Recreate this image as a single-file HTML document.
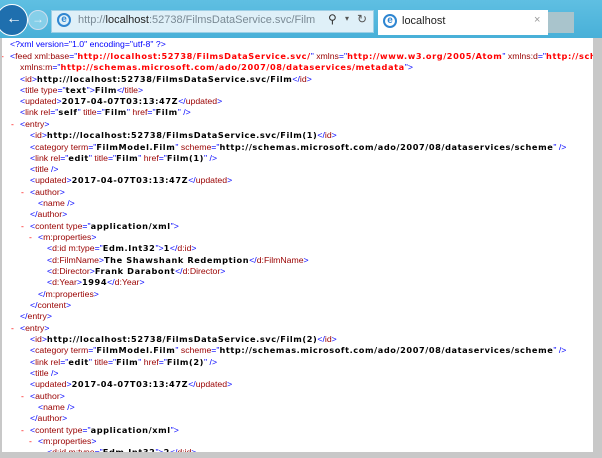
<!DOCTYPE html>
<html><head><meta charset="utf-8"><style>
html,body{margin:0;padding:0}
body{width:602px;height:458px;overflow:hidden;background:#c8c8c8;position:relative;font-family:"Liberation Sans",sans-serif}
#tb{position:absolute;left:0;top:0;width:602px;height:38px;background:linear-gradient(#5fbfe2,#48b0d8)}
#page{position:absolute;left:2px;top:38px;width:591px;height:414px;background:#fff;overflow:hidden}
.l{position:absolute;white-space:nowrap;font-size:8.7px;line-height:11px;color:#990000}
.b{color:#0000ff}.v,.r{font-family:"DejaVu Sans",sans-serif;font-size:8.2px;font-weight:bold;letter-spacing:0.6px}.v{color:#000}.r{color:#f00}.m{color:#f00;position:absolute;left:-9px}
</style></head><body>
<div id="tb">
 <div style="position:absolute;left:-4px;top:4px;width:30px;height:30px;border-radius:50%;background:#1f6fae;border:1px solid #fff"></div>
 <div style="position:absolute;left:6px;top:11px;color:#fff;font-size:16px;font-weight:bold;line-height:16px">&#8592;</div>
 <div style="position:absolute;left:28px;top:10px;width:18px;height:18px;border-radius:50%;border:1px solid #cde;background:#86cfe9"></div>
 <div style="position:absolute;left:32px;top:12px;color:#e8f4fa;font-size:12px;line-height:14px">&#8594;</div>
 <div style="position:absolute;left:51px;top:10px;width:321px;height:21px;background:#dff0f8;border:1px solid #9ccfe6"></div>
 <div style="position:absolute;left:57px;top:13px;width:14px;height:14px;border-radius:50%;border:2px solid #2f86d1;box-sizing:border-box;color:#2f86d1;font-size:10px;font-weight:bold;line-height:10px;text-align:center">e</div>
 <div style="position:absolute;left:78px;top:14px;font-size:11px;color:#7a8a95">http://<span style="color:#222">localhost</span>:52738/FilmsDataService.svc/Film</div>
 <div style="position:absolute;left:328px;top:12px;font-size:12px;color:#333">&#9906;</div>
 <div style="position:absolute;left:345px;top:14px;font-size:8px;color:#555">&#9662;</div>
 <div style="position:absolute;left:357px;top:12px;font-size:12px;color:#555">&#8635;</div>
 <div style="position:absolute;left:378px;top:10px;width:170px;height:25px;background:#fff"></div>
 <div style="position:absolute;left:383px;top:14px;width:14px;height:14px;border-radius:50%;border:2px solid #2f86d1;box-sizing:border-box;color:#2f86d1;font-size:10px;font-weight:bold;line-height:10px;text-align:center">e</div>
 <div style="position:absolute;left:402px;top:15px;font-size:11px;color:#222">localhost</div>
 <div style="position:absolute;left:534px;top:14px;font-size:11px;color:#999">&#215;</div>
 <div style="position:absolute;left:548px;top:12px;width:26px;height:21px;background:#a9c4cc"></div>
</div>
<div id="page">
<div class="l b" style="left:8px;top:1px">&lt;?xml version="1.0" encoding="utf-8" ?&gt;</div>
<div class="l" style="left:8px;top:13px"><span class="m">-</span><span class="b">&lt;</span>feed xml:base<span class="b">="</span><span class="r">http://localhost:52738/FilmsDataService.svc/</span><span class="b">"</span> xmlns<span class="b">="</span><span class="r">http://www.w3.org/2005/Atom</span><span class="b">"</span> xmlns:d<span class="b">="</span><span class="r">http://schemas.microsoft.com/ado/2007/08/dataservices</span></div>
<div class="l" style="left:18px;top:24px">xmlns:m<span class="b">="</span><span class="r">http://schemas.microsoft.com/ado/2007/08/dataservices/metadata</span><span class="b">"&gt;</span></div>
<div class="l" style="left:18px;top:36px"><span class="b">&lt;</span>id<span class="b">&gt;</span><span class="v">http://localhost:52738/FilmsDataService.svc/Film</span><span class="b">&lt;/</span>id<span class="b">&gt;</span></div>
<div class="l" style="left:18px;top:47px"><span class="b">&lt;</span>title type<span class="b">="</span><span class="v">text</span><span class="b">"&gt;</span><span class="v">Film</span><span class="b">&lt;/</span>title<span class="b">&gt;</span></div>
<div class="l" style="left:18px;top:58px"><span class="b">&lt;</span>updated<span class="b">&gt;</span><span class="v">2017-04-07T03:13:47Z</span><span class="b">&lt;/</span>updated<span class="b">&gt;</span></div>
<div class="l" style="left:18px;top:69px"><span class="b">&lt;</span>link rel<span class="b">="</span><span class="v">self</span><span class="b">"</span> title<span class="b">="</span><span class="v">Film</span><span class="b">"</span> href<span class="b">="</span><span class="v">Film</span><span class="b">" /&gt;</span></div>

<div class="l" style="left:18px;top:81px"><span class="m">-</span><span class="b">&lt;</span>entry<span class="b">&gt;</span></div>
<div class="l" style="left:28px;top:92px"><span class="b">&lt;</span>id<span class="b">&gt;</span><span class="v">http://localhost:52738/FilmsDataService.svc/Film(1)</span><span class="b">&lt;/</span>id<span class="b">&gt;</span></div>
<div class="l" style="left:28px;top:104px"><span class="b">&lt;</span>category term<span class="b">="</span><span class="v">FilmModel.Film</span><span class="b">"</span> scheme<span class="b">="</span><span class="v">http://schemas.microsoft.com/ado/2007/08/dataservices/scheme</span><span class="b">" /&gt;</span></div>
<div class="l" style="left:28px;top:115px"><span class="b">&lt;</span>link rel<span class="b">="</span><span class="v">edit</span><span class="b">"</span> title<span class="b">="</span><span class="v">Film</span><span class="b">"</span> href<span class="b">="</span><span class="v">Film(1)</span><span class="b">" /&gt;</span></div>
<div class="l" style="left:28px;top:126px"><span class="b">&lt;</span>title <span class="b">/&gt;</span></div>
<div class="l" style="left:28px;top:137px"><span class="b">&lt;</span>updated<span class="b">&gt;</span><span class="v">2017-04-07T03:13:47Z</span><span class="b">&lt;/</span>updated<span class="b">&gt;</span></div>
<div class="l" style="left:28px;top:149px"><span class="m">-</span><span class="b">&lt;</span>author<span class="b">&gt;</span></div>
<div class="l" style="left:36px;top:160px"><span class="b">&lt;</span>name <span class="b">/&gt;</span></div>
<div class="l" style="left:28px;top:171px"><span class="b">&lt;/</span>author<span class="b">&gt;</span></div>
<div class="l" style="left:28px;top:183px"><span class="m">-</span><span class="b">&lt;</span>content type<span class="b">="</span><span class="v">application/xml</span><span class="b">"&gt;</span></div>
<div class="l" style="left:36px;top:194px"><span class="m">-</span><span class="b">&lt;</span>m:properties<span class="b">&gt;</span></div>
<div class="l" style="left:45px;top:205px"><span class="b">&lt;</span>d:id m:type<span class="b">="</span><span class="v">Edm.Int32</span><span class="b">"&gt;</span><span class="v">1</span><span class="b">&lt;/</span>d:id<span class="b">&gt;</span></div>
<div class="l" style="left:45px;top:217px"><span class="b">&lt;</span>d:FilmName<span class="b">&gt;</span><span class="v">The Shawshank Redemption</span><span class="b">&lt;/</span>d:FilmName<span class="b">&gt;</span></div>
<div class="l" style="left:45px;top:228px"><span class="b">&lt;</span>d:Director<span class="b">&gt;</span><span class="v">Frank Darabont</span><span class="b">&lt;/</span>d:Director<span class="b">&gt;</span></div>
<div class="l" style="left:45px;top:239px"><span class="b">&lt;</span>d:Year<span class="b">&gt;</span><span class="v">1994</span><span class="b">&lt;/</span>d:Year<span class="b">&gt;</span></div>
<div class="l" style="left:36px;top:251px"><span class="b">&lt;/</span>m:properties<span class="b">&gt;</span></div>
<div class="l" style="left:28px;top:262px"><span class="b">&lt;/</span>content<span class="b">&gt;</span></div>
<div class="l" style="left:18px;top:273px"><span class="b">&lt;/</span>entry<span class="b">&gt;</span></div>

<div class="l" style="left:18px;top:285px"><span class="m">-</span><span class="b">&lt;</span>entry<span class="b">&gt;</span></div>
<div class="l" style="left:28px;top:296px"><span class="b">&lt;</span>id<span class="b">&gt;</span><span class="v">http://localhost:52738/FilmsDataService.svc/Film(2)</span><span class="b">&lt;/</span>id<span class="b">&gt;</span></div>
<div class="l" style="left:28px;top:307px"><span class="b">&lt;</span>category term<span class="b">="</span><span class="v">FilmModel.Film</span><span class="b">"</span> scheme<span class="b">="</span><span class="v">http://schemas.microsoft.com/ado/2007/08/dataservices/scheme</span><span class="b">" /&gt;</span></div>
<div class="l" style="left:28px;top:319px"><span class="b">&lt;</span>link rel<span class="b">="</span><span class="v">edit</span><span class="b">"</span> title<span class="b">="</span><span class="v">Film</span><span class="b">"</span> href<span class="b">="</span><span class="v">Film(2)</span><span class="b">" /&gt;</span></div>
<div class="l" style="left:28px;top:330px"><span class="b">&lt;</span>title <span class="b">/&gt;</span></div>
<div class="l" style="left:28px;top:341px"><span class="b">&lt;</span>updated<span class="b">&gt;</span><span class="v">2017-04-07T03:13:47Z</span><span class="b">&lt;/</span>updated<span class="b">&gt;</span></div>
<div class="l" style="left:28px;top:353px"><span class="m">-</span><span class="b">&lt;</span>author<span class="b">&gt;</span></div>
<div class="l" style="left:36px;top:364px"><span class="b">&lt;</span>name <span class="b">/&gt;</span></div>
<div class="l" style="left:28px;top:375px"><span class="b">&lt;/</span>author<span class="b">&gt;</span></div>
<div class="l" style="left:28px;top:387px"><span class="m">-</span><span class="b">&lt;</span>content type<span class="b">="</span><span class="v">application/xml</span><span class="b">"&gt;</span></div>
<div class="l" style="left:36px;top:398px"><span class="m">-</span><span class="b">&lt;</span>m:properties<span class="b">&gt;</span></div>
<div class="l" style="left:45px;top:409px"><span class="b">&lt;</span>d:id m:type<span class="b">="</span><span class="v">Edm.Int32</span><span class="b">"&gt;</span><span class="v">2</span><span class="b">&lt;/</span>d:id<span class="b">&gt;</span></div>
</div>
</body></html>
